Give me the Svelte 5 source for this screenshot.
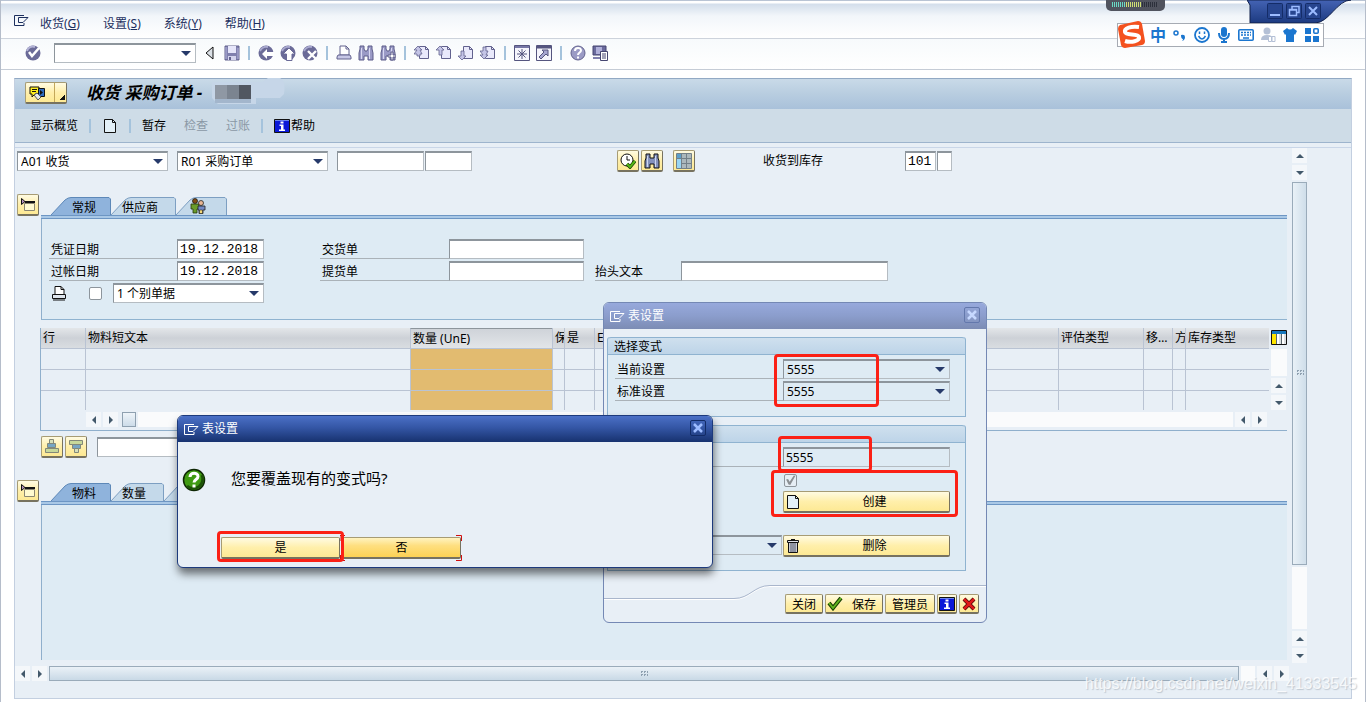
<script lang="ts">
interface Column {
  label: string;
  width?: number;
  selected?: boolean;
}

interface Tab {
  label: string;
  width: number;
  icon?: string;
}

const menus = [
  { text: "收货", key: "G" },
  { text: "设置", key: "S" },
  { text: "系统", key: "Y" },
  { text: "帮助", key: "H" },
];

const toolGroups = [
  ["back", "up", "cancel"],
  ["print", "find", "findNext"],
  ["pageFirst", "pagePrev", "pageNext", "pageLast"],
  ["session", "shortcut"],
  ["help", "layout"],
];

const headerTabs: Tab[] = [
  { label: "常规", width: 60 },
  { label: "供应商", width: 65 },
  { label: "", width: 51, icon: "people" },
];

const detailTabs: Tab[] = [
  { label: "物料", width: 60 },
  { label: "数量", width: 53 },
  { label: "", width: 60 },
];

const columns: Column[] = [
  { label: "行", width: 44 },
  { label: "物料短文本", width: 325 },
  { label: "数量 (UnE)", width: 142, selected: true },
  { label: "保", width: 12 },
  { label: "是", width: 30 },
  { label: "E" },
  { label: "评估类型", width: 85 },
  { label: "移…", width: 29 },
  { label: "方", width: 13 },
  { label: "库存类型", width: 84 },
];

let headerTab = $state(0);
let detailTab = $state(0);
let docDate = $state("19.12.2018");
let postDate = $state("19.12.2018");
let variant = $state("5555");
let movement = $state("101");
</script>

{#snippet icon(name: string)}
  <svg class="icon" width="16" height="16" viewBox="0 0 16 16" aria-hidden="true">
    {#if name === "ok"}
      <circle cx="8" cy="8" r="7.5" fill="#6b6b98" />
      <path d="M2 6a6 6 0 0 1 8-4" stroke="#b4b4d6" stroke-width="2" fill="none" />
      <path d="M4 7l3 4 7-8" stroke="#fff" stroke-width="2.5" fill="none" />
    {:else if name === "save"}
      <path d="M1 1h14v14H1z" fill="#8080ae" stroke="#62628e" />
      <path d="M4 1h8v7H4z" fill="#e6e6fa" />
      <path d="M4 11h8v4H4z" fill="#d4d4ee" />
      <path d="M5 12h2v3H5z" fill="#62628e" />
      <path d="M2 2v12M14 3v11" stroke="#b3b3dc" />
    {:else if name === "back" || name === "up" || name === "cancel"}
      <circle cx="8" cy="8" r="7.5" fill="#6b6b98" />
      <path d="M2 6a7 7 0 0 1 8-4" stroke="#a9a9cf" stroke-width="2" fill="none" />
      {#if name === "back"}
        <path d="M4 9l5-5v3h7v4H9v3z" fill="#fff" />
      {:else if name === "up"}
        <path d="M9 3l6 6h-3v6.500H6.500V9H3z" fill="#fff" stroke="#6b6b98" />
      {:else}
        <path d="M6 6l8 8M14 6l-8 8" stroke="#fff" stroke-width="2.4" />
      {/if}
    {:else if name === "print"}
      <path d="M4 1h6l3 3v6H4z" fill="#fff" stroke="#62628e" />
      <path d="M10 1v3h3" fill="none" stroke="#62628e" />
      <path d="M2 10h12l1 2v2H1v-2z" fill="#c7c7e6" stroke="#62628e" />
    {:else if name === "find" || name === "findNext"}
      <path d="M2 1h4v3l1 2h2l1-2V1h4v3l1 4v7h-5v-4H6v4H1V8l1-4z" fill="#9a9ac6" stroke="#5d5d89" />
      <path d="M3.500 3v11M11.500 3v11" stroke="#d9d9f2" />
      {#if name === "findNext"}
        <path d="M8 10h3V7h2v3h3v2h-3v3h-2v-3H8z" fill="#fff" stroke="#5d5d89" />
      {/if}
    {:else if name.startsWith("page")}
      <path d="M5.500 1.500h6l3 3v9h-9z" fill="#e9e9fb" stroke="#62628e" />
      <path d="M11.500 1.500v3h3" fill="none" stroke="#62628e" />
      {#if name === "pagePrev"}
        <path d="M4 1l4 4H6v5H3V5H0z" fill="#c4c4e6" stroke="#62628e" stroke-width=".8" />
      {:else if name === "pageNext"}
        <path d="M4 15l4-4H6V6H3v5H0z" fill="#c4c4e6" stroke="#62628e" stroke-width=".8" />
      {:else if name === "pageFirst"}
        <path d="M4 1l4 4H6l2 4H6v2H3V9H0l3-4H0z" fill="#c4c4e6" stroke="#62628e" stroke-width=".8" />
      {:else}
        <path d="M4 14l4-4H6l2-4H6V2H3v4H0l3 4H0z" fill="#c4c4e6" stroke="#62628e" stroke-width=".8" />
      {/if}
    {:else if name === "session"}
      <path d="M.5.5h15v15H.5z" fill="#f5f5fc" stroke="#55557f" />
      <path d="M1 2h14" stroke="#7777a6" stroke-width="2" />
      <path d="M8 4v10M3 9h10M4.500 5.500l7 7M11.500 5.500l-7 7" stroke="#55557f" />
    {:else if name === "shortcut"}
      <path d="M.5.5h15v15H.5z" fill="#f5f5fc" stroke="#55557f" />
      <path d="M1 2h14" stroke="#55557f" stroke-width="3" />
      <path d="M6 5h6v6l-2-2-5 5-2-2 5-5z" fill="#a6a6d0" stroke="#55557f" />
    {:else if name === "help"}
      <circle cx="8" cy="8" r="7" fill="#9b9bc5" stroke="#62628e" />
      <path d="M5 6c0-4 6-4 6-.5 0 2-3 2-3 4.500M8 11.500v2" stroke="#fff" stroke-width="2" fill="none" />
    {:else if name === "layout"}
      <path d="M1 1h13v9H1z" fill="#6a6a9d" stroke="#454570" />
      <path d="M4 2h6v7H4z" fill="#b0b0da" />
      <path d="M1 12h8v2H1z" fill="#8080ae" />
      <path d="M8.500 6.500h7v9h-7z" fill="#fff" stroke="#454570" />
      <path d="M10 9h4M10 11h4M10 13h4" stroke="#454570" />
    {:else if name === "sheet"}
      <path d="M2.500 1.500h8l3 3v10h-11z" fill="#e3f0f8" stroke="#111" />
      <path d="M10.500 1.500v3h3" fill="none" stroke="#111" />
    {:else if name === "info"}
      <path d="M.5 1.500h15v13H.5z" fill="#0a18d8" stroke="#111" />
      <path d="M1 2h14v1H1z" fill="#6c83f0" />
      <path d="M6.500 3.500h3v2h-3zM5.500 6.500h4v5h1.500v1.500h-6v-1.500H7V8H5.500z" fill="#fff" />
    {:else if name === "printer"}
      <path d="M4 1.500h6l3 3V10H4z" fill="#fff" stroke="#111" />
      <path d="M10 1.500v3h3" fill="none" stroke="#111" />
      <path d="M1.500 9.500h13v4h-13z" fill="#dfe6ee" stroke="#111" />
      <path d="M2 15h12" stroke="#111" />
    {:else if name === "clock"}
      <circle cx="7" cy="7" r="6" fill="#fff" stroke="#111" />
      <path d="M7 3v4h3" stroke="#111" fill="none" />
      <path d="M7 11l3 3 5-6" stroke="#173d00" stroke-width="3.500" fill="none" />
      <path d="M7 11l3 3 5-6" stroke="#55b517" stroke-width="2" fill="none" />
    {:else if name === "binoculars"}
      <path d="M2 1h4v4h4V1h4v4l1 3v7h-5v-4H6v4H1V8l1-3z" fill="#8492bd" stroke="#111" />
      <path d="M3.500 3v11M11.500 3v11" stroke="#cdd7f0" />
    {:else if name === "grid"}
      <path d="M.5.5h15v15H.5z" fill="#acb8bc" stroke="#738088" />
      <path d="M1 1h4v4H1z" fill="#5c9fca" />
      <path d="M1 5h4v10H1z" fill="#98d5f3" />
      <path d="M5.500 1v14M10.500 1v14M1 5.500h14M5 10.500h10" stroke="#738088" />
    {:else if name === "collapse"}
      <path d="M4.500 6.500h10v7h-10z" fill="#fffad0" stroke="#8a8672" />
      <path d="M5 5h10" stroke="#111" stroke-width="2" />
      <path d="M1.500 1.500v6L5 4.500z" fill="#b391bb" stroke="#111" />
    {:else if name === "people"}
      <circle cx="5" cy="3" r="2.500" fill="#824c12" stroke="#111" stroke-width=".7" />
      <path d="M1 6h8v5H7v4H3v-4H1z" fill="#6a9c2a" stroke="#23350c" stroke-width=".8" />
      <circle cx="11" cy="5" r="2.500" fill="#e9b694" stroke="#111" stroke-width=".7" />
      <path d="M8 8h7v4h-2v3.500H9V12H8z" fill="#7289c5" stroke="#222" stroke-width=".8" />
      <path d="M9.500 12h3v3.500h-3z" fill="#f4d879" stroke="#222" stroke-width=".6" />
    {:else if name === "columns"}
      <path d="M.5.5h15v14H.5z" fill="#fff" stroke="#111" />
      <path d="M1 1h14v3H1z" fill="#1778bd" />
      <path d="M1 4h4.500v10H1z" fill="#ffe600" />
      <path d="M5.500 4v10M10.500 4v10" stroke="#59666c" />
      <path d="M9 4v10M14 4v10" stroke="#b6bfc4" />
    {:else if name === "stackUp"}
      <path d="M5.500.5h4v4h-4z" fill="#d7dfba" stroke="#82887a" />
      <path d="M3.500 4.500h8v4h-8z" fill="#76a5c4" stroke="#82887a" />
      <path d="M1.500 9.500h13v4h-13z" fill="#c7d89b" stroke="#82887a" />
    {:else if name === "stackDown"}
      <path d="M1.500 1.500h13v4h-13z" fill="#c7d89b" stroke="#82887a" />
      <path d="M4.500 5.500h8v4h-8z" fill="#76a5c4" stroke="#82887a" />
      <path d="M6.500 9.500h4v4h-4z" fill="#d7dfba" stroke="#82887a" />
    {:else if name === "trash"}
      <path d="M3.500 4h9v10.500h-9z" fill="#c9ccd6" stroke="#111" />
      <path d="M6 5v9M8 5v9M10 5v9" stroke="#555a6c" />
      <path d="M2.500 2.500h11v2h-11z" fill="#dfe2ea" stroke="#111" />
      <path d="M6 1.500h4" stroke="#111" />
    {:else if name === "check"}
      <path d="M2 8l4 5 8-10" stroke="#173d00" stroke-width="4" fill="none" />
      <path d="M2 8l4 5 8-10" stroke="#63b51f" stroke-width="2" fill="none" />
    {:else if name === "cross"}
      <path d="M3 3l10 10M13 3L3 13" stroke="#4a0505" stroke-width="4" />
      <path d="M3 3l10 10M13 3L3 13" stroke="#e01919" stroke-width="2.500" />
    {:else if name === "services"}
      <path d="M1 2h9v7H6l-3 3V9H1z" fill="#ffee21" stroke="#111" />
      <path d="M3 4.500h5M3 6.500h4" stroke="#111" />
      <path d="M9.500 3.500h6v8h-6z" fill="#2e6abf" stroke="#111" />
      <path d="M11 5l3 2.500-3 2.500z" fill="#111" />
      <path d="M5 10l3-2 4 4-3 3z" fill="#e3e8ef" stroke="#555" />
    {/if}
  </svg>
{/snippet}

{#snippet exitIcon()}
  <svg class="exit" width="15" height="13" viewBox="0 0 15 13" aria-hidden="true">
    <path d="M10 1.500H.5v10H10V9M14 3.500H4.500v5H9l5-5z" fill="none" stroke="currentColor" />
  </svg>
{/snippet}

{#snippet arrow(dir: string)}
  <button class="arrow" aria-label={dir}><span class="tri {dir}"></span></button>
{/snippet}

{#snippet closeButton()}
  <button class="close" aria-label="关闭窗口">
    <svg width="10" height="10" viewBox="0 0 10 10" aria-hidden="true">
      <path d="M1 1l8 8M9 1L1 9" stroke="currentColor" stroke-width="2.500" />
    </svg>
  </button>
{/snippet}

{#snippet tabShape(width: number)}
  <svg class="tab-shape" {width} height="18" viewBox="0 0 {width} 18" aria-hidden="true">
    <path d="M0 18L14 3Q17 .5 20 .5H{width - 2}L{width - 0.5} 2V18" />
  </svg>
{/snippet}

{#snippet tabRow(tabs: Tab[], active: number, pick: (i: number) => void)}
  <div class="tabs" role="tablist">
    {#each tabs as tab, i}
      <button
        class="tab"
        class:active={i === active}
        role="tab"
        aria-selected={i === active}
        aria-label={tab.label || "其他"}
        style="width: {tab.width}px"
        onclick={() => pick(i)}
      >
        {@render tabShape(tab.width)}
        <span class="tab-label">
          {#if tab.icon}{@render icon(tab.icon)}{:else}{tab.label}{/if}
        </span>
      </button>
    {/each}
  </div>
  <div class="tab-strip"></div>
{/snippet}

<div class="window">
  <nav class="menubar">
    {@render exitIcon()}
    {#each menus as menu}
      <button class="menu">{menu.text}(<u>{menu.key}</u>)</button>
    {/each}
  </nav>

  <div class="toolbar">
    <button class="tool" aria-label="ok">{@render icon("ok")}</button>
    <span class="combo command"><input aria-label="命令" /></span>
    <button class="tool small" aria-label="收起">
      <svg width="9" height="14" viewBox="0 0 9 14" aria-hidden="true">
        <path d="M8 1v12L1 7z" fill="#dbe0e6" stroke="#111" />
      </svg>
    </button>
    <button class="tool" aria-label="save">{@render icon("save")}</button>
    {#each toolGroups as group}
      <span class="sep"></span>
      {#each group as name}
        <button class="tool" aria-label={name}>{@render icon(name)}</button>
      {/each}
    {/each}
  </div>

  <div class="screen">
    <header class="titlebar">
      <button class="btn services" aria-label="服务">
        {@render icon("services")}
        <span class="corner"></span>
      </button>
      <h1>收货 采购订单 -</h1>
      <svg class="mosaic" width="76" height="28" viewBox="0 0 76 28" aria-hidden="true">
        <path d="M2 4h50l6-4h12q6 2 4 16l-4 4H46v6H8l-6-6z" fill="#c6d6e8" />
        <path d="M5 7h12v14H5z" fill="#8f98a4" />
        <path d="M17 7h12v14H17z" fill="#7b8490" />
        <path d="M29 7h12v14H29z" fill="#515761" />
        <path d="M5 21h36v4H5z" fill="#a3b6cc" />
      </svg>
    </header>

    <div class="appbar">
      <button class="action">显示概览</button>
      <span class="sep"></span>
      <button class="action" aria-label="新建">{@render icon("sheet")}</button>
      <span class="sep"></span>
      <div class="actions">
        <button class="action">暂存</button>
        <button class="action" disabled>检查</button>
        <button class="action" disabled>过账</button>
      </div>
      <span class="sep"></span>
      <button class="action help">{@render icon("info")}帮助</button>
    </div>

    <div class="work">
      <main>
        <div class="criteria">
          <span class="combo wide"><select aria-label="业务"><option>A01 收货</option></select></span>
          <span class="combo wide"><select aria-label="参考凭证"><option>R01 采购订单</option></select></span>
          <div class="pair">
            <input class="field order" aria-label="订单" />
            <input class="field item" aria-label="项目" />
          </div>
          <div class="icon-buttons">
            <button class="btn square" aria-label="执行">{@render icon("clock")}</button>
            <button class="btn square" aria-label="查找">{@render icon("binoculars")}</button>
            <button class="btn square apart" aria-label="表格">{@render icon("grid")}</button>
          </div>
          <label for="movement">收货到库存</label>
          <div class="pair">
            <input id="movement" class="field mono movement" bind:value={movement} />
            <input class="field stock" aria-label="特殊库存" />
          </div>
        </div>

        <section class="tabset">
          <button class="btn square" aria-label="收起抬头">{@render icon("collapse")}</button>
          <div class="tab-column">
            {@render tabRow(headerTabs, headerTab, (i) => (headerTab = i))}
            <div class="panel header-form">
              <label for="doc-date">凭证日期</label>
              <input id="doc-date" class="field mono" bind:value={docDate} />
              <label for="delivery" class="second">交货单</label>
              <input id="delivery" class="field" />
              <label for="post-date" class="first">过帐日期</label>
              <input id="post-date" class="field mono" bind:value={postDate} />
              <label for="bill" class="second">提货单</label>
              <input id="bill" class="field" />
              <label for="head-text" class="third">抬头文本</label>
              <input id="head-text" class="field" />
              <div class="slip">
                {@render icon("printer")}
                <input type="checkbox" aria-label="打印" />
                <span class="combo wide"><select aria-label="单据"><option>1 个别单据</option></select></span>
              </div>
            </div>
          </div>
        </section>

        <section class="items">
          <div class="items-top">
            <table>
              <colgroup>
                {#each columns as col}
                  <col style={col.width ? `width: ${col.width}px` : undefined} />
                {/each}
              </colgroup>
              <thead>
                <tr>
                  {#each columns as col}
                    <th class:selected={col.selected}>{col.label}</th>
                  {/each}
                </tr>
              </thead>
              <tbody>
                {#each [1, 2, 3] as row (row)}
                  <tr>
                    {#each columns as col}
                      <td class:selected={col.selected}></td>
                    {/each}
                  </tr>
                {/each}
              </tbody>
            </table>
            <div class="items-side">
              <button class="plain" aria-label="列设置">{@render icon("columns")}</button>
              <span class="trough"></span>
              {@render arrow("up")}
              {@render arrow("down")}
            </div>
          </div>
          <div class="items-scroll">
            {@render arrow("left")}
            {@render arrow("right")}
            <span class="knob"></span>
            <span class="trough"></span>
            {@render arrow("left")}
            {@render arrow("right")}
          </div>
        </section>

        <div class="sorter">
          <button class="btn square" aria-label="升序">{@render icon("stackUp")}</button>
          <button class="btn square" aria-label="降序">{@render icon("stackDown")}</button>
          <input class="field" aria-label="搜索" />
        </div>

        <section class="tabset grow">
          <button class="btn square" aria-label="收起明细">{@render icon("collapse")}</button>
          <div class="tab-column">
            {@render tabRow(detailTabs, detailTab, (i) => (detailTab = i))}
            <div class="panel detail"></div>
          </div>
        </section>
      </main>

      <div class="vscroll">
        {@render arrow("up")}
        {@render arrow("down")}
        <span class="thumb"><span class="grip"></span></span>
        <span class="trough"></span>
        {@render arrow("up")}
        {@render arrow("down")}
      </div>
    </div>

    <div class="hscroll">
      {@render arrow("left")}
      {@render arrow("right")}
      <span class="thumb"><span class="grip"></span></span>
      <span class="trough"></span>
      {@render arrow("left")}
      {@render arrow("right")}
    </div>
  </div>

  <!-- table settings -->
  <div class="dialog settings" role="dialog" aria-label="表设置">
    <div class="dialog-title">{@render exitIcon()}<span>表设置</span>{@render closeButton()}</div>
    <div class="dialog-body">
      <fieldset class="group">
        <legend>选择变式</legend>
        <div class="rows">
          <label for="current">当前设置</label>
          <span class="combo"><select id="current"><option>5555</option></select></span>
          <label for="standard">标准设置</label>
          <span class="combo"><select id="standard"><option>5555</option></select></span>
        </div>
      </fieldset>
      <fieldset class="group maintain" aria-label="变式维护">
        <div class="group-head"></div>
        <div class="rows">
          <span class="rule"></span>
          <input class="field" aria-label="变式" bind:value={variant} />
          <input class="use" type="checkbox" aria-label="用作标准设置" checked disabled />
          <button class="btn create">{@render icon("sheet")}<span>创建</span></button>
          <span class="combo pick"><select aria-label="已有变式"><option></option></select></span>
          <button class="btn remove">{@render icon("trash")}<span>删除</span></button>
        </div>
      </fieldset>
    </div>
    <div class="dialog-foot">
      <svg class="foot-curve" width="382" height="16" viewBox="0 0 382 16" aria-hidden="true">
        <path d="M0 14.500H130C146 14.500 150 1.500 166 1.500H382" fill="none" stroke="#fff" />
        <path d="M0 13.500H130C146 13.500 150 .5 166 .5H382" fill="none" stroke="#a9b6cc" />
      </svg>
      <button class="btn">关闭</button>
      <button class="btn store">{@render icon("check")}保存</button>
      <button class="btn">管理员</button>
      <button class="btn tiny" aria-label="信息">{@render icon("info")}</button>
      <button class="btn tiny" aria-label="取消">{@render icon("cross")}</button>
    </div>
    <span class="mark current-mark"></span>
    <span class="mark variant-mark"></span>
    <span class="mark create-mark"></span>
  </div>

  <!-- overwrite confirmation -->
  <div class="dialog confirm" role="alertdialog" aria-label="表设置">
    <div class="dialog-title">{@render exitIcon()}<span>表设置</span>{@render closeButton()}</div>
    <div class="question">
      <svg width="24" height="24" viewBox="0 0 24 24" aria-hidden="true">
        <circle cx="12" cy="12" r="10.500" fill="#3f9a12" stroke="#0d2604" stroke-width="1.500" />
        <path d="M5 18A9.500 9.500 0 0 0 20 7" fill="none" stroke="#1c5206" stroke-width="3" />
        <path d="M8 9c0-5 8-5 8-.5 0 3-4 3-4 6M12 16.500v3" fill="none" stroke="#fff" stroke-width="3" />
      </svg>
      <p>您要覆盖现有的变式吗?</p>
    </div>
    <div class="answers">
      <button class="btn">是</button>
      <button class="btn focused">否</button>
    </div>
    <svg class="focus-ring" width="122" height="26" viewBox="0 0 122 26" aria-hidden="true">
      <path d="M0 6V.5h5M116 .5h5.500V6M121.500 20v5.500H116M5 25.500H.5V20" fill="none" stroke="#d01010" />
    </svg>
    <span class="mark yes-mark"></span>
  </div>

  <div class="meter">
    <svg width="46" height="5" aria-hidden="true">
      <path d="M0 2.500h14" stroke="#69d9c4" stroke-width="5" stroke-dasharray="1 1" />
      <path d="M14 2.500h16" stroke="#cfdf73" stroke-width="5" stroke-dasharray="1 1" />
      <path d="M30 2.500h16" stroke="#2c303b" stroke-width="5" stroke-dasharray="1 1" />
    </svg>
  </div>

  <svg class="controls" width="104" height="25" viewBox="0 0 104 25" role="img" aria-label="窗口控制">
    <defs>
      <linearGradient id="blue" x2="0" y2="1">
        <stop offset="0" stop-color="#4463b4" />
        <stop offset="1" stop-color="#1c3a80" />
      </linearGradient>
    </defs>
    <path d="M0 0l3 5v18h65c14 0 22-23 36-23z" fill="url(#blue)" stroke="#10204a" />
    <g fill="#27458f" stroke="#142c68">
      <rect x="20.500" y="3.500" width="15" height="15" rx="1" />
      <rect x="39.500" y="3.500" width="15" height="15" rx="1" />
      <rect x="58.500" y="3.500" width="15" height="15" rx="1" />
    </g>
    <path d="M23 15h10M62 7l8 8M70 7l-8 8" stroke="#9dbcff" stroke-width="2" />
    <path d="M45 9V6.500h7v6h-2M42.500 9.500h7v6h-7zM42 10h8" fill="none" stroke="#9dbcff" stroke-width="1.500" />
  </svg>

  <div class="ime">
    <svg class="ime-logo" width="29" height="29" viewBox="0 0 29 29" aria-hidden="true">
      <path d="M3 5L21 1q3 0 4 3l3 17q0 3-3 4L8 28q-3 0-4-3L1 9q0-3 2-4z" fill="#f4511e" />
      <path d="M22 7C14 6 7 8 8 12s13 1 14 5-8 6-14 4" fill="none" stroke="#fff" stroke-width="4" />
    </svg>
    <span class="zh">中</span>
    <svg width="16" height="16" viewBox="0 0 16 16" aria-hidden="true">
      <circle cx="4" cy="6" r="2" fill="none" stroke="#1b76cf" stroke-width="1.500" />
      <path d="M9 8q4-1 4 2t-3 4q1-1 1-2-2 0-2-4z" fill="#1b76cf" />
    </svg>
    <svg width="16" height="16" viewBox="0 0 16 16" aria-hidden="true">
      <circle cx="8" cy="8" r="7" fill="none" stroke="#1b76cf" stroke-width="1.800" />
      <path d="M4.500 9q3.500 6 7 0M5.500 4.500v2.500M10.500 4.500v2.500" fill="none" stroke="#1b76cf" stroke-width="1.500" />
    </svg>
    <svg width="16" height="16" viewBox="0 0 16 16" aria-hidden="true">
      <rect x="5" y="0" width="6" height="10" rx="3" fill="#1b76cf" />
      <path d="M3 6q0 6 5 6t5-6M8 12v3M5 15h6" fill="none" stroke="#1b76cf" stroke-width="2" />
    </svg>
    <svg width="16" height="16" viewBox="0 0 16 16" aria-hidden="true">
      <rect x=".8" y="2.800" width="14.400" height="10.400" rx="1" fill="none" stroke="#1b76cf" stroke-width="1.600" />
      <path d="M3 5.500h10M3 8h10" stroke="#1b76cf" stroke-width="1.500" stroke-dasharray="2 1" />
      <path d="M5 11h6" stroke="#1b76cf" stroke-width="1.500" />
    </svg>
    <svg width="16" height="16" viewBox="0 0 16 16" aria-hidden="true">
      <circle cx="7" cy="4" r="3.500" fill="#b4c0d6" />
      <path d="M1 13q0-5 6-5t7 5z" fill="#b4c0d6" />
      <path d="M8.500 9.500h3v5h-3zM12 9.500h3v5h-3z" fill="#fff" stroke="#b4c0d6" />
    </svg>
    <svg width="16" height="16" viewBox="0 0 16 16" aria-hidden="true">
      <path d="M5 1q3 3 6 0l4 3-2 4-1-1v8H4V7L3 8 1 4z" fill="#1b76cf" />
    </svg>
    <svg width="16" height="16" viewBox="0 0 16 16" aria-hidden="true">
      <path d="M1 1h6v6H1zM1 9h6v6H1zM9 9h6v6H9z" fill="#1b76cf" />
      <rect x="9.800" y="1.800" width="4.400" height="4.400" rx="1" fill="none" stroke="#1b76cf" stroke-width="1.600" />
    </svg>
  </div>

  <span class="watermark">https://blog.csdn.net/weixin_41333545</span>
</div>

<style>
  :global(body) {
    background: #fff;
  }

  .window {
    position: relative;
    box-sizing: border-box;
    min-height: 100vh;
    display: flex;
    flex-direction: column;
    overflow: hidden;
    border: solid #b5bdca;
    border-width: 0 1px;
    background: #fff;
    color: #000;
    font: 12px/20px "Noto Sans", "Noto Sans CJK SC", sans-serif;
  }

  .window :global(*) {
    box-sizing: border-box;
  }

  button,
  input,
  select {
    margin: 0;
    padding: 0;
    border: 0;
    border-radius: 0;
    background: none;
    color: inherit;
    font: inherit;
  }

  svg {
    display: block;
    flex: none;
  }

  /* menu and system toolbar */
  .menubar {
    display: flex;
    align-items: center;
    gap: 23px;
    height: 39px;
    padding: 9px 13px 0;
    border-bottom: 1px solid #cdd3dc;
    background: linear-gradient(#b9c4d4 0 1px, #fff 1px 3px, #d3deeb 4px, #f2f6fa 16px, #fff);
    color: #1c2f5e;
  }

  .menubar .exit {
    margin: 0 -12px 7px 0;
  }

  .toolbar {
    display: flex;
    align-items: center;
    gap: 6px;
    height: 31px;
    padding: 0 24px 3px;
    border-bottom: 1px solid #c5ccd6;
    background: linear-gradient(#f7fafc, #fff);
  }

  .tool {
    width: 16px;
    height: 16px;
  }

  .tool.small {
    width: 16px;
    padding-left: 3px;
  }

  .command {
    width: 142px;
    height: 22px;
    margin: 0 0 0 7px;
  }

  .sep {
    width: 6px;
    height: 14px;
    background: linear-gradient(90deg, transparent 2px, #a5c3dc 2px 4px, transparent 4px);
  }

  /* screen */
  .screen {
    flex: 1;
    display: flex;
    flex-direction: column;
    margin: 8px 13px 3px;
    padding-bottom: 17px;
    border: 1px solid #c3cfe0;
    border-top-color: #92a9c4;
    background: #e8eff6;
  }

  .titlebar {
    display: flex;
    align-items: center;
    height: 30px;
    padding: 0 10px 2px;
    background: linear-gradient(#c9dae8, #b8cde0 50%, #a9c1da);
  }

  h1 {
    margin: 0 2px 0 19px;
    font-size: 17px;
    font-style: italic;
    font-weight: 700;
    word-spacing: normal;
  }

  .services {
    display: flex;
    align-items: center;
    gap: 9px;
    width: 42px;
    height: 21px;
    padding-left: 3px;
  }

  .corner {
    width: 12px;
    height: 19px;
    border-left: 1px solid #c3a75a;
    background: linear-gradient(135deg, transparent 50%, #111 50%) 5px 12px / 5px 5px no-repeat;
  }

  .mosaic {
    margin: 0 0 2px 6px;
  }

  .appbar {
    display: flex;
    align-items: center;
    gap: 9px;
    height: 34px;
    padding: 0 15px;
    border-bottom: 1px solid #9db4cd;
    background: #cedce7;
  }

  .actions {
    display: flex;
    gap: 18px;
  }

  .action:disabled {
    color: #8a98a5;
  }

  .action.help {
    display: flex;
    align-items: center;
    gap: 1px;
  }

  .work {
    flex: 1;
    display: flex;
    gap: 5px;
    margin-top: 4px;
    padding-right: 44px;
    border-top: 1px solid #c9d6e8;
  }

  main {
    flex: 1;
    display: flex;
    flex-direction: column;
    min-width: 0;
    padding: 2px 0 3px 2px;
  }

  /* fields */
  .field,
  .combo {
    height: 20px;
    border: 1px solid #b5bcc2;
    border-top: 2px solid #8d959c;
    border-left-color: #8d959c;
    background: #fff;
  }

  .field {
    min-width: 0;
    padding: 0 2px;
  }

  .mono {
    font: 13px/17px "Liberation Mono", monospace;
  }

  .combo {
    position: relative;
    display: block;
  }

  .combo select,
  .combo input {
    display: block;
    width: 100%;
    height: 100%;
    padding: 0 18px 0 3px;
    appearance: none;
    line-height: 16px;
  }

  .combo::after {
    content: "";
    position: absolute;
    top: 6px;
    right: 4px;
    border: 5px solid transparent;
    border-top-color: #263a6a;
    border-bottom-width: 0;
    pointer-events: none;
  }

  .wide {
    width: 151px;
  }

  input[type="checkbox"] {
    width: 13px;
    height: 13px;
    appearance: none;
    border: 1px solid #8d959c;
    border-radius: 2px;
    background: #fff;
  }

  /* yellow buttons */
  .btn {
    height: 22px;
    border: 1px solid #a79c74;
    border-right-color: #77725f;
    border-bottom: 2px solid #77725f;
    border-radius: 2px;
    background: linear-gradient(#fffbe2, #ffefab 50%, #fde994);
  }

  .square {
    display: flex;
    align-items: center;
    justify-content: center;
    flex: none;
    width: 22px;
  }

  .pair {
    display: flex;
    gap: 1px;
  }

  .criteria {
    display: flex;
    align-items: center;
    gap: 9px;
    height: 22px;
  }

  .order {
    width: 87px;
  }

  .item {
    width: 47px;
  }

  .icon-buttons {
    display: flex;
    gap: 2px;
    margin: 0 59px 0 136px;
  }

  .apart {
    margin-left: 8px;
  }

  .criteria label {
    width: 133px;
  }

  .movement {
    width: 31px;
  }

  .stock {
    width: 15px;
  }

  /* tabs */
  .tabset {
    display: flex;
    gap: 2px;
    margin-top: 22px;
  }

  .grow {
    flex: 1;
  }

  .tab-column {
    flex: 1;
    display: flex;
    flex-direction: column;
    padding-top: 3px;
  }

  .tabs {
    display: flex;
    padding-left: 10px;
  }

  .tab {
    position: relative;
    height: 18px;
  }

  .tab-shape {
    position: absolute;
    inset: 0;
    fill: #c4d9ea;
    stroke: #7d9fc2;
  }

  .active .tab-shape {
    fill: #8fb3dc;
    stroke: #5d88b8;
  }

  .tab-label {
    position: relative;
    display: block;
    padding-left: 11px;
    text-align: left;
    line-height: 22px;
  }

  .tab-label .icon {
    margin-left: 3px;
  }

  .active .tab-label {
    padding-left: 21px;
  }

  .tab-strip {
    height: 4px;
    border: solid #6d96c4;
    border-width: 1px 0;
    background: #a9c8e6;
  }

  .panel {
    border-left: 1px solid #8fafcc;
    background: #deebf4;
  }

  .detail {
    flex: 1;
    min-height: 140px;
  }

  .header-form {
    display: grid;
    grid-template-columns: 128px 87px 56px 129px 135px 11px 86px 207px;
    grid-auto-rows: 20px;
    gap: 2px 0;
    height: 101px;
    padding: 20px 0 0 7px;
    border-bottom: 1px solid #8fb3d0;
  }

  .header-form label {
    padding: 0 2px;
    border-bottom: 1px solid #aab2b8;
    line-height: 22px;
  }

  .first {
    grid-column: 1;
  }

  .second {
    grid-column: 4;
  }

  .third {
    grid-column: 7;
  }

  .header-form label.third {
    padding: 0;
  }

  .slip {
    grid-column: 1 / 3;
    display: flex;
    align-items: center;
    padding-left: 2px;
  }

  .slip input {
    margin: 0 11px 0 22px;
  }

  /* item table */
  .items {
    margin: 8px 0 0 23px;
    border: solid #8fafcc;
    border-width: 0 0 1px 1px;
  }

  .items-top {
    display: flex;
    gap: 2px;
  }

  table {
    flex: 1;
    width: 0;
    table-layout: fixed;
    border-collapse: separate;
    border-spacing: 0;
  }

  th {
    height: 21px;
    padding: 0 0 0 2px;
    overflow: hidden;
    border: solid #b9c3d3;
    border-width: 0 0 1px 1px;
    background: linear-gradient(#e3e6e9, #cdd1d7 50%, #d9dde1);
    font-weight: 400;
    text-align: left;
    white-space: nowrap;
  }

  th.selected {
    border-top: 1px solid #8d959c;
    background: linear-gradient(#cfd3d9, #e2e5e8);
    line-height: 19px;
  }

  th:first-child,
  td:first-child {
    border-left: 0;
  }

  td {
    height: 21px;
    padding: 0;
    border: solid #b9c3d3;
    border-width: 0 0 1px 1px;
  }

  tr:last-child td {
    height: 19px;
    border-bottom: 0;
  }

  thead tr:last-child th {
    border-bottom: 1px solid #b9c3d3;
  }

  td.selected {
    background: #e2bb70;
  }

  .items-side {
    display: flex;
    flex-direction: column;
    gap: 2px;
    width: 16px;
  }

  .plain {
    width: 16px;
    height: 19px;
  }

  .trough {
    flex: 1;
    background: #fafbfc;
  }

  .items-scroll {
    display: flex;
    gap: 2px;
    height: 20px;
    padding: 2px 20px 3px 45px;
  }

  .knob {
    width: 14px;
    margin-left: 2px;
    border: 1px solid #8ea0b0;
    background: linear-gradient(#eef4f9, #cddce9);
  }

  .arrow {
    display: flex;
    align-items: center;
    justify-content: center;
    flex: none;
    width: 15px;
    height: 15px;
    background: #f4f7fa;
  }

  .tri {
    border: 4px solid transparent;
  }

  .tri.up {
    border-top-width: 0;
    border-bottom-color: #43596b;
  }

  .tri.down {
    border-bottom-width: 0;
    border-top-color: #43596b;
  }

  .tri.left {
    border-left-width: 0;
    border-right-color: #43596b;
  }

  .tri.right {
    border-right-width: 0;
    border-left-color: #43596b;
  }

  .sorter {
    display: flex;
    align-items: center;
    gap: 2px;
    margin: 5px 0 0 24px;
  }

  .sorter .field {
    width: 134px;
    margin-left: 8px;
  }

  /* page scrollbars */
  .vscroll {
    display: flex;
    flex-direction: column;
    gap: 2px;
    width: 15px;
  }

  .thumb {
    display: flex;
    align-items: center;
    justify-content: center;
    border: 1px solid #9aabba;
  }

  .vscroll .thumb {
    flex: 86;
    background: linear-gradient(90deg, #e9f1f7, #cfdeea);
  }

  .vscroll .trough {
    flex: 14;
  }

  .grip {
    width: 8px;
    height: 6px;
    background: conic-gradient(#8ea0b0 25%, transparent 0) 0 0 / 3px 3px;
  }

  .hscroll {
    display: flex;
    gap: 2px;
    height: 15px;
    margin: 3px 62px 0 0;
  }

  .hscroll .thumb {
    flex: 988;
    background: linear-gradient(#eaf1f7, #c9d9e6);
  }

  .hscroll .trough {
    flex: 12;
  }

  /* dialogs */
  .dialog {
    position: absolute;
    display: flex;
    flex-direction: column;
    border: 1px solid #7488b4;
    border-radius: 6px;
    background: #e8eff6;
  }

  .dialog-title {
    display: flex;
    align-items: center;
    gap: 3px;
    height: 26px;
    padding: 0 6px;
    border-radius: 5px 5px 0 0;
    background: linear-gradient(#97a9dc, #8b9dcc 50%, #7c8cb4);
    color: #fff;
    line-height: 22px;
  }

  .close {
    display: flex;
    align-items: center;
    justify-content: center;
    width: 16px;
    height: 16px;
    margin: 0 0 2px auto;
    border: 1px solid #6378ac;
    border-radius: 2px;
    color: #c6d8ff;
  }

  .settings {
    top: 302px;
    left: 602px;
    width: 384px;
  }

  .dialog-body {
    display: flex;
    flex-direction: column;
    gap: 8px;
    padding: 8px 20px 0 3px;
  }

  .group {
    min-width: 0;
    height: 80px;
    margin: 0;
    padding: 0;
    border: 1px solid #8fb3d0;
    border-top: 0;
    border-radius: 3px 3px 0 0;
    background: #deebf4;
  }

  .maintain {
    height: 146px;
  }

  legend,
  .group-head {
    float: left;
    width: 100%;
    height: 18px;
    padding: 0 6px;
    border: solid #8fb3d0;
    border-width: 1px 0;
    border-radius: 3px 3px 0 0;
    background: linear-gradient(#cfe0ee, #bdd4e8);
    line-height: 17px;
  }

  .rows {
    clear: both;
    display: grid;
    grid-template-columns: 168px 167px;
    grid-auto-rows: 22px;
    align-items: start;
    padding: 4px 0 0 7px;
  }

  .rows label,
  .rule {
    height: 20px;
    padding: 0 2px;
    border-bottom: 1px solid #aab2b8;
    line-height: 22px;
  }

  .rows .field,
  .rows .combo {
    background: #deebf4;
  }

  .rows .use {
    grid-column: 2;
    align-self: center;
    margin-left: 1px;
    background: #e6eef5;
  }

  .use::before {
    content: "";
    display: block;
    width: 11px;
    height: 11px;
    background: #8b9094;
    clip-path: polygon(10% 45%, 28% 40%, 42% 65%, 80% 8%, 95% 12%, 48% 95%, 32% 90%);
  }

  .create,
  .remove {
    grid-column: 2;
    display: flex;
    align-items: center;
    padding: 0 1px;
  }

  .create span,
  .remove span {
    flex: 1;
  }

  .pick {
    grid-row: 5;
    grid-column: 1;
    width: 120px;
    margin-left: 47px;
  }

  .remove {
    grid-row: 5;
  }

  .dialog-foot {
    position: relative;
    display: flex;
    justify-content: flex-end;
    gap: 2px;
    height: 51px;
    padding: 23px 7px 0;
  }

  .dialog-foot .btn {
    position: relative;
    height: 20px;
    padding: 0 6px;
    line-height: 19px;
  }

  .dialog-foot .store {
    display: flex;
    gap: 9px;
    padding-left: 1px;
  }

  .dialog-foot .tiny {
    width: 20px;
    padding: 0 1px;
  }

  .foot-curve {
    position: absolute;
    top: 14px;
    left: 0;
  }

  .confirm {
    top: 415px;
    left: 176px;
    width: 536px;
    height: 153px;
    border-color: #1d3a7c;
    box-shadow: 1px 6px 9px #00000088;
  }

  .confirm .dialog-title {
    background: linear-gradient(#4b70c6, #3456a5 45%, #17326f);
  }

  .confirm .close {
    border-color: #122b66;
    color: #9dbcff;
  }

  .question {
    display: flex;
    gap: 25px;
    padding: 26px 4px 0;
  }

  .question p {
    margin: 0;
    font-size: 15px;
  }

  .answers {
    display: flex;
    gap: 2px;
    margin: 45px 0 0 43px;
  }

  .answers .btn {
    width: 119px;
  }

  .answers .focused {
    background: linear-gradient(#fff3c0, #fedf80 40%, #fdd254);
  }

  .focus-ring {
    position: absolute;
    top: 119px;
    left: 162px;
  }

  .mark {
    position: absolute;
    border: 3px solid #fb2015;
    border-radius: 4px;
    pointer-events: none;
  }

  .current-mark {
    top: 51px;
    left: 170px;
    width: 105px;
    height: 53px;
  }

  .variant-mark {
    top: 133px;
    left: 174px;
    width: 94px;
    height: 36px;
  }

  .create-mark {
    top: 167px;
    left: 167px;
    width: 187px;
    height: 47px;
  }

  .yes-mark {
    top: 115px;
    left: 39px;
    width: 127px;
    height: 31px;
  }

  /* desktop overlays */
  .meter {
    position: absolute;
    top: 0;
    right: 200px;
    width: 59px;
    height: 11px;
    padding: 2px 6px;
    border-radius: 0 0 5px 5px;
    background: #50535e;
  }

  .controls {
    position: absolute;
    top: 0;
    right: 14px;
  }

  .ime {
    position: absolute;
    top: 23px;
    right: 41px;
    display: flex;
    align-items: center;
    gap: 6px;
    height: 24px;
    padding: 0 3px 0 32px;
    border: 1px solid #a6abb3;
    background: #fff;
  }

  .ime-logo {
    position: absolute;
    top: -4px;
    left: -1px;
  }

  .zh {
    width: 16px;
    color: #1b76cf;
    font-size: 16px;
    font-weight: 700;
  }

  .watermark {
    position: absolute;
    right: 8px;
    bottom: 8px;
    color: #ffffffcc;
    font: 16px/20px "Liberation Sans", sans-serif;
    text-shadow: 1px 1px 1px #9aa5b188;
  }
</style>
